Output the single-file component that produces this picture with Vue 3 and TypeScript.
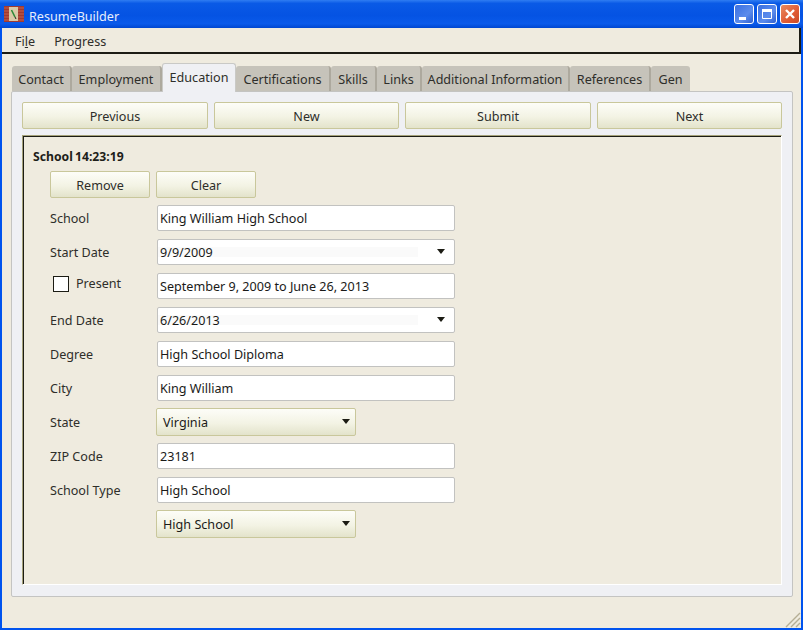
<script setup lang="ts">
const tabs = [
  { name: 'Contact', w: 60 },
  { name: 'Employment', w: 90 },
  { name: 'Education', w: 74, active: true },
  { name: 'Certifications', w: 95 },
  { name: 'Skills', w: 46 },
  { name: 'Links', w: 45 },
  { name: 'Additional Information', w: 148 },
  { name: 'References', w: 81 },
  { name: 'Gen', w: 39 }
]
const actions = ['Previous', 'New', 'Submit', 'Next']
</script>

<template>
  <div class="window">
    <header class="titlebar">
      <svg class="appicon" width="20" height="16" viewBox="0 0 20 16">
        <rect x="0" y="0" width="20" height="16" fill="#a03a30" />
        <path d="M0 2h20M0 5h20M0 8h20M0 11h20M0 14h20" stroke="#c4604e" stroke-width="1" />
        <rect x="5" y="1" width="9" height="14" fill="#d9c9a8" />
        <path d="M7.5 4l3.5 7" stroke="#2f8a3a" stroke-width="1.6" />
        <path d="M11 11l1 2" stroke="#222" stroke-width="1" />
      </svg>
      <span class="title">ResumeBuilder</span>
      <div class="winbtns">
        <div class="winbtn">
          <svg width="18" height="18" viewBox="0 0 18 18"><rect x="4" y="12" width="7" height="3" fill="#fff" /></svg>
        </div>
        <div class="winbtn">
          <svg width="18" height="18" viewBox="0 0 18 18"><path d="M4.5 4.5h9v9h-9z" fill="none" stroke="#fff" /><rect x="4" y="4" width="10" height="3" fill="#fff" /></svg>
        </div>
        <div class="winbtn close">
          <svg width="18" height="18" viewBox="0 0 18 18"><path d="M5 5l8 8M13 5l-8 8" stroke="#fff" stroke-width="2.4" /></svg>
        </div>
      </div>
    </header>

    <div class="client">
      <nav class="menubar">
        <span class="menu">Fi<u>l</u>e</span>
        <span class="menu">Pro<u>g</u>ress</span>
      </nav>

      <div class="tabs">
        <div
          v-for="t in tabs"
          :key="t.name"
          class="tab"
          :class="{ active: t.active }"
          :style="{ width: t.w + 'px' }"
        >{{ t.name }}</div>
      </div>

      <section class="pane">
        <div class="actions">
          <button v-for="a in actions" :key="a" class="btn">{{ a }}</button>
        </div>

        <div class="group">
          <div class="group-title">School 14:23:19</div>
          <div class="group-btns">
            <button class="btn small">Remove</button>
            <button class="btn small">Clear</button>
          </div>

          <div class="form">
            <label>School</label>
            <div class="field">King William High School</div>

            <label>Start Date</label>
            <div class="field date"><span>9/9/2009</span><i class="arrow"></i></div>

            <label class="present"><span class="check"></span>Present</label>
            <div class="field">September 9, 2009 to June 26, 2013</div>

            <label>End Date</label>
            <div class="field date"><span>6/26/2013</span><i class="arrow"></i></div>

            <label>Degree</label>
            <div class="field">High School Diploma</div>

            <label>City</label>
            <div class="field">King William</div>

            <label>State</label>
            <div class="combo"><span>Virginia</span><i class="arrow"></i></div>

            <label>ZIP Code</label>
            <div class="field">23181</div>

            <label>School Type</label>
            <div class="field">High School</div>

            <label></label>
            <div class="combo"><span>High School</span><i class="arrow"></i></div>
          </div>
        </div>
      </section>

      <svg class="grip" width="16" height="16" viewBox="0 0 16 16">
        <path d="M1 15L15 1M6 15L15 6M11 15l4-4" stroke="#b5ae95" stroke-width="1.4" />
      </svg>
    </div>
  </div>
</template>

<style scoped>
.window {
  width: 803px;
  height: 630px;
  box-sizing: border-box;
  display: flex;
  flex-direction: column;
  background: #0053ee;
  padding: 0 2px 2px;
  font-family: "Noto Sans", sans-serif;
  font-size: 12.6px;
  color: #2e2e2a;
  overflow: hidden;
}

.titlebar {
  height: 28px;
  margin: 0 -2px;
  padding: 0 3px 0 4px;
  display: flex;
  align-items: center;
  background: linear-gradient(180deg, #2f7df2 0%, #0a5ae6 12%, #0553e3 55%, #0a5aea 85%, #0047d0 100%);
  flex: none;
}

.appicon {
  margin-right: 5px;
}

.title {
  color: #e8eefb;
  padding-top: 4px;
}

.winbtns {
  margin-left: auto;
  display: flex;
  gap: 3px;
}

.winbtn {
  width: 18px;
  height: 18px;
  border: 1px solid #fff;
  border-radius: 3px;
  background: linear-gradient(135deg, #3a6fe0, #5c8cec 60%, #2f5fd0);
  display: flex;
}

.winbtn.close {
  background: linear-gradient(135deg, #e88a60, #df5a34 60%, #c94a28);
}

.client {
  flex: 1;
  position: relative;
  background: #efebdf;
  display: flex;
  flex-direction: column;
  min-height: 0;
}

.menubar {
  height: 26px;
  box-sizing: border-box;
  border-bottom: 2px solid #1c1c14;
  border-right: 2px solid #1c1c14;
  display: flex;
  align-items: center;
  padding: 3px 0 0 13px;
  gap: 19px;
  flex: none;
}

.tabs {
  display: flex;
  align-items: flex-end;
  height: 37px;
  padding-left: 10px;
  flex: none;
  position: relative;
  z-index: 1;
}

.tab {
  height: 25px;
  box-sizing: border-box;
  background: #c6c3ba;
  border-right: 2px solid #ada99e;
  border-radius: 3px 3px 0 0;
  padding-top: 2px;
  display: flex;
  align-items: center;
  justify-content: center;
  white-space: nowrap;
}

.tab:last-child {
  border-right: none;
}

.tab.active {
  height: 29px;
  background: #eff0f4;
  border: 1px solid #c9c9c6;
  border-bottom: none;
  margin-bottom: -1px;
  padding-top: 0;
  padding-bottom: 2px;
}

.pane {
  width: 782px;
  height: 506px;
  margin-left: 9px;
  box-sizing: border-box;
  background: #eff0f4;
  border: 1px solid #c4c4c2;
  border-radius: 2px;
  padding: 10px 10px 11px 10px;
  display: flex;
  flex-direction: column;
  gap: 6px;
}

.actions {
  display: grid;
  grid-template-columns: 186px 185px 186px 185px;
  gap: 6px;
}

.btn {
  height: 27px;
  box-sizing: border-box;
  background: linear-gradient(180deg, #fdfdf8 0%, #f3f3e4 55%, #e3e3cb 100%);
  border: 1px solid #c9c79b;
  border-radius: 2px;
  font: inherit;
  color: inherit;
  padding: 1px 0 0;
}

.group {
  flex: 1;
  background: #efebdf;
  border-top: 1px solid #a5a27a;
  border-left: 1px solid #a5a27a;
  border-right: 1px solid #fff;
  border-bottom: 1px solid #fff;
  box-shadow: inset 1px 1px 0 #1c1c14;
  padding: 0 0 0 27px;
}

.group-title {
  height: 35px;
  margin-left: -17px;
  padding-top: 5px;
  box-sizing: border-box;
  display: flex;
  align-items: center;
  font-size: 12.2px;
  font-weight: bold;
  word-spacing: -1px;
  color: #1e1e1a;
}

.group-btns {
  display: flex;
  gap: 6px;
  margin-bottom: 7px;
}

.btn.small {
  width: 100px;
}

.form {
  display: grid;
  grid-template-columns: 107px 298px;
  grid-auto-rows: 26px;
  row-gap: 8px;
  align-items: center;
}

.form label {
  display: flex;
  align-items: center;
}

.present {
  padding-left: 3px;
  margin-top: -5px;
}

.check {
  width: 14px;
  height: 14px;
  border: 1px solid #1c1c14;
  background: #fff;
  margin-right: 7px;
}

.field {
  height: 26px;
  box-sizing: border-box;
  background: #fff;
  border: 1px solid #c2c2c0;
  border-radius: 2px;
  padding: 0 2px;
  display: flex;
  align-items: center;
  color: #1a1a18;
}

.field.date {
  padding: 0 9px 0 2px;
  justify-content: space-between;
  background: linear-gradient(#fff 30%, #fafafa 30%, #fafafa 70%, #fff 70%) no-repeat left / 260px 100% #fff;
}

.combo {
  width: 200px;
  height: 28px;
  margin-left: -1px;
  box-sizing: border-box;
  background: linear-gradient(180deg, #fdfdf8 0%, #f3f3e4 55%, #e3e3cb 100%);
  border: 1px solid #c9c79b;
  border-radius: 2px;
  padding: 0 5px 0 6px;
  display: flex;
  align-items: center;
  justify-content: space-between;
  color: #1a1a18;
}

.arrow {
  width: 0;
  height: 0;
  border-left: 4.5px solid transparent;
  border-right: 4.5px solid transparent;
  border-top: 5px solid #1c1c14;
  margin-top: -1px;
}

.grip {
  position: absolute;
  right: 0;
  bottom: 0;
}
</style>

<style>
html,
body {
  margin: 0;
  overflow: hidden;
}
</style>
